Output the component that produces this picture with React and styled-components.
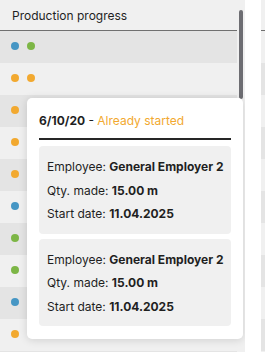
import React from "react";
import styled, { createGlobalStyle } from "styled-components";

const GlobalStyle = createGlobalStyle`
    html, body
    {
        margin: 0;
        padding: 0;
        background: #ffffff;
        font-family: Inter, "Noto Sans", sans-serif;
        color: #1f1f1f;
    }
`;

const DOT_COLORS = {
    blue: "#4696c4",
    green: "#7db646",
    orange: "#f2a930",
};

const rows = [
    ["blue", "green"],
    ["orange", "orange"],
    ["orange"],
    ["orange"],
    ["orange"],
    ["blue"],
    ["green"],
    ["green"],
    ["blue"],
    ["orange"],
    ["orange"],
];

const entries = [
    { employee: "General Employer 2", qty: "15.00 m", start: "11.04.2025" },
    { employee: "General Employer 2", qty: "15.00 m", start: "11.04.2025" },
];

const Dot = ({ color }) => <DotStyle $color={DOT_COLORS[color]} />;

const Popover = () =>
{
    return(
        <PopoverStyle>
            <PopoverTitle>
                <b>6/10/20</b> - <Status>Already started</Status>
            </PopoverTitle>
            <CardList>
                {entries.map((entry, i) => (
                    <Card key={i}>
                        <Line>Employee: <b>{entry.employee}</b></Line>
                        <Line>Qty. made: <b>{entry.qty}</b></Line>
                        <Line>Start date: <b>{entry.start}</b></Line>
                    </Card>
                ))}
            </CardList>
        </PopoverStyle>
    )
}

const App = () =>
{
    return(
        <>
            <GlobalStyle />
            <Screen>
                <Panel>
                    <Table>
                        <HeaderCell>Production progress</HeaderCell>
                        {rows.map((dots, i) => (
                            <Row key={i} $dark={i % 2 === 0}>
                                {dots.map((c, j) => <Dot key={j} color={c} />)}
                            </Row>
                        ))}
                    </Table>
                    <ScrollTrack>
                        <ScrollThumb />
                    </ScrollTrack>
                    <Popover />
                </Panel>
                <SidePanel>
                    <SideHeader />
                    {rows.map((_, i) => (
                        <SideRow key={i} $dark={i % 2 === 1} />
                    ))}
                </SidePanel>
            </Screen>
        </>
    )
}

export default App;

const Screen = styled.div`
    display: flex;
    gap: 16px;
    width: 265px;
    height: 352px;
    overflow: hidden;
`;

const Panel = styled.div`
    position: relative;
    display: flex;
    width: 245px;
    flex-shrink: 0;
    background-color: #f0f0f0;
    overflow: hidden;
`;

const Table = styled.div`
    width: 237px;
    flex-shrink: 0;
`;

const HeaderCell = styled.div`
    height: 30px;
    display: flex;
    align-items: center;
    padding-left: 12px;
    font-size: 12px;
    color: #1f1f1f;
    border-bottom: 1px solid #707070;
`;

const Row = styled.div`
    height: 32px;
    display: flex;
    align-items: center;
    gap: 8px;
    padding: 0 0 2px 11px;
    box-sizing: border-box;
    background-color: ${({ $dark }) => $dark ? "#e4e4e4" : "#f0f0f0"};
`;

const DotStyle = styled.span`
    width: 8px;
    height: 8px;
    border-radius: 50%;
    background-color: ${({ $color }) => $color};
`;

const ScrollTrack = styled.div`
    flex: 1;
    padding: 10px 2px 0;
`;

const ScrollThumb = styled.div`
    width: 4px;
    height: 89px;
    border-radius: 2px;
    background-color: #6d6d72;
`;

const PopoverStyle = styled.div`
    position: absolute;
    left: 27px;
    top: 98px;
    width: 216px;
    box-sizing: border-box;
    padding: 12px 12px 13px;
    background-color: #ffffff;
    border-radius: 5px;
    box-shadow: 0 1px 8px rgba(0, 0, 0, 0.14);
`;

const PopoverTitle = styled.div`
    font-size: 12px;
    line-height: 22px;
    color: #1f1f1f;
    padding-bottom: 6px;
    border-bottom: 2px solid #262626;

    b
    {
        font-weight: 700;
    }
`;

const Status = styled.span`
    color: #f2a930;
`;

const CardList = styled.div`
    display: flex;
    flex-direction: column;
    gap: 5px;
    margin-top: 6px;
`;

const Card = styled.div`
    padding: 9px 8px 8px;
    border-radius: 4px;
    background-color: #f0f0f0;
`;

const Line = styled.div`
    font-size: 12px;
    line-height: 23.5px;
    color: #1f1f1f;
    white-space: nowrap;

    b
    {
        font-weight: 700;
    }
`;

const SidePanel = styled.div`
    flex: 1;
    background-color: #f0f0f0;
`;

const SideHeader = styled.div`
    height: 30px;
    border-bottom: 1px solid #707070;
`;

const SideRow = styled.div`
    height: 32px;
    background-color: ${({ $dark }) => $dark ? "#e4e4e4" : "#f0f0f0"};
`;
